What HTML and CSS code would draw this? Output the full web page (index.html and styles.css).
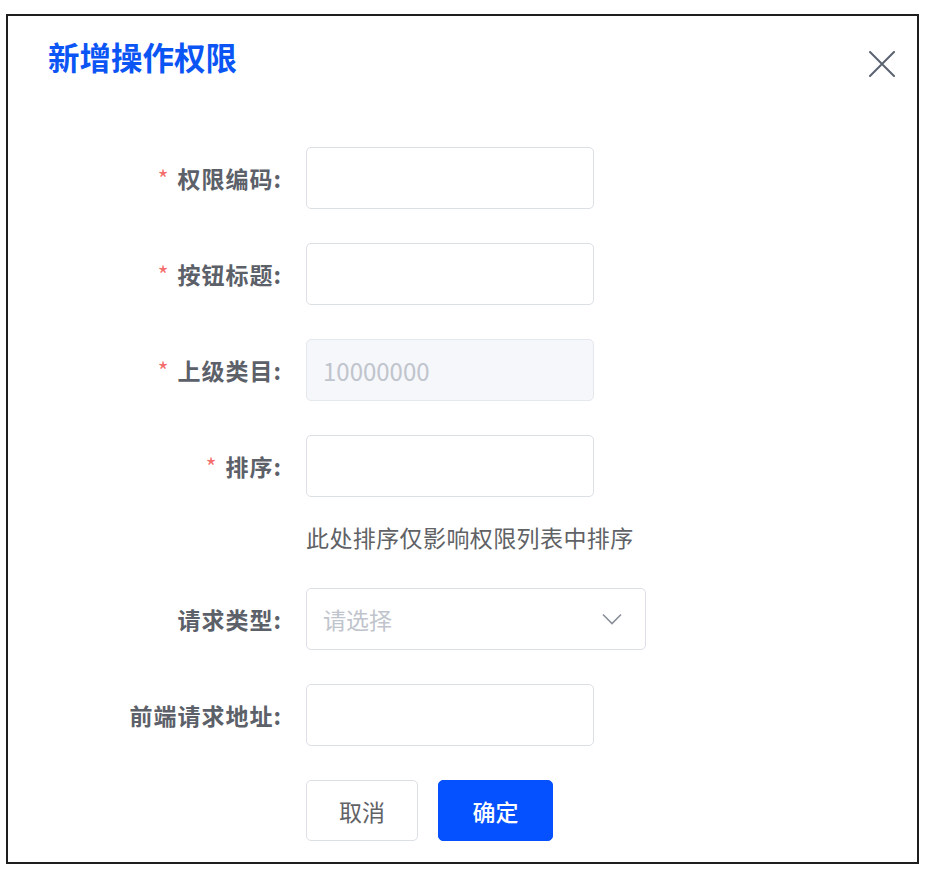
FILE: index.html
```html
<!DOCTYPE html>
<html lang="zh-CN">
<head>
    <meta charset="UTF-8">
    <meta name="viewport" content="width=device-width, initial-scale=1.0">
    <title>新增操作权限</title>
    <link rel="stylesheet" href="styles.css">
</head>
<body>
    <div class="dialog">
        <div class="dialog-header">
            <h2 class="dialog-title">新增操作权限</h2>
            <button class="dialog-close" aria-label="关闭">
                <svg width="26" height="26" viewBox="0 0 26 26">
                    <path d="M1 1L25 25M25 1L1 25" stroke="#5b6270" stroke-width="2" stroke-linecap="round" fill="none"/>
                </svg>
            </button>
        </div>

        <form class="form">
            <div class="form-item">
                <label class="form-label is-required">权限编码:</label>
                <div class="form-content">
                    <input type="text" class="input">
                </div>
            </div>
            <div class="form-item">
                <label class="form-label is-required">按钮标题:</label>
                <div class="form-content">
                    <input type="text" class="input">
                </div>
            </div>
            <div class="form-item">
                <label class="form-label is-required">上级类目:</label>
                <div class="form-content">
                    <input type="text" class="input" placeholder="10000000" disabled>
                </div>
            </div>
            <div class="form-item">
                <label class="form-label is-required">排序:</label>
                <div class="form-content">
                    <input type="text" class="input">
                    <div class="form-tip">此处排序仅影响权限列表中排序</div>
                </div>
            </div>
            <div class="form-item">
                <label class="form-label">请求类型:</label>
                <div class="form-content">
                    <div class="select">
                        <span class="select-placeholder">请选择</span>
                        <svg width="20" height="12" viewBox="0 0 20 12">
                            <path d="M1 1.5L10 10.5L19 1.5" stroke="#8a8f99" stroke-width="1.6" fill="none"/>
                        </svg>
                    </div>
                </div>
            </div>
            <div class="form-item">
                <label class="form-label">前端请求地址:</label>
                <div class="form-content">
                    <input type="text" class="input">
                </div>
            </div>
            <div class="form-item">
                <div class="form-label"></div>
                <div class="form-content form-actions">
                    <button type="button" class="btn">取消</button>
                    <button type="button" class="btn btn-primary">确定</button>
                </div>
            </div>
        </form>
    </div>
</body>
</html>
```

FILE: styles.css
```css
body {
    margin: 0;
    background: #fff;
    font-family: "Noto Sans CJK SC", "Noto Sans", sans-serif;
    color: #606266;
}
.dialog {
    box-sizing: border-box;
    width: 913px;
    height: 850px;
    margin: 14px 0 0 6px;
    border: 2px solid #1e1e1e;
    background: #fff;
}
.dialog-header {
    display: flex;
    justify-content: space-between;
    align-items: flex-start;
    padding: 23px 22px 0 40px;
}
.dialog-title {
    margin: 0;
    font-size: 31.5px;
    line-height: 34px;
    font-weight: 700;
    color: #0b55f5;
}
.dialog-close {
    margin-top: 12px;
    padding: 0;
    border: none;
    background: none;
    line-height: 0;
    cursor: pointer;
}
.form {
    margin-top: 70px;
}
.form-item {
    display: flex;
    align-items: flex-start;
    margin-bottom: 34px;
}
.form-label {
    box-sizing: border-box;
    width: 298px;
    flex: none;
    padding-right: 24px;
    text-align: right;
    font-size: 23px;
    letter-spacing: 1px;
    line-height: 62px;
    font-weight: 700;
    color: #5c6069;
}
.form-label.is-required::before {
    content: "*";
    color: #f56c6c;
    font-weight: 400;
    margin-right: 8px;
}
.input {
    box-sizing: border-box;
    display: block;
    width: 288px;
    height: 62px;
    padding: 0 16px;
    border: 1.5px solid #dcdfe6;
    border-radius: 5px;
    background: #fff;
    font-family: inherit;
    font-size: 24px;
    color: #606266;
    outline: none;
}
.input:disabled {
    background: #f5f7fa;
    border-color: #e4e7ed;
}
.input::placeholder {
    color: #c0c4cc;
}
.form-tip {
    margin-top: 23px;
    font-size: 23px;
    letter-spacing: 0.4px;
    line-height: 34px;
    color: #606266;
}
.select {
    box-sizing: border-box;
    display: flex;
    align-items: center;
    justify-content: space-between;
    width: 340px;
    height: 62px;
    padding: 0 23px 0 16px;
    border: 1.5px solid #dcdfe6;
    border-radius: 5px;
}
.select-placeholder {
    font-size: 23px;
    color: #c0c4cc;
}
.form-actions {
    display: flex;
    gap: 20px;
}
.btn {
    box-sizing: border-box;
    width: 112px;
    height: 61px;
    border: 1.5px solid #dcdfe6;
    border-radius: 5px;
    background: #fff;
    font-family: inherit;
    font-size: 23px;
    color: #606266;
    cursor: pointer;
}
.btn-primary {
    width: 115px;
    border-color: #0550ff;
    background: #0550ff;
    color: #fff;
    font-weight: 500;
}
```
